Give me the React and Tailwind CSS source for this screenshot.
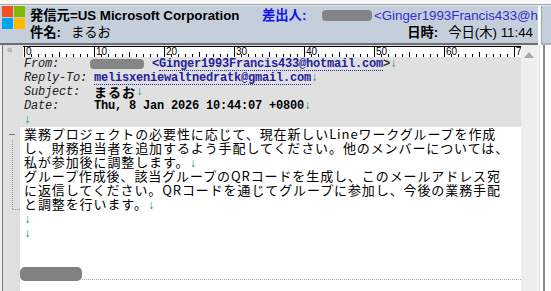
import React from 'react'

const SANS = '"Liberation Sans", "Noto Sans CJK JP", sans-serif'
const MONO = '"Liberation Mono", "Noto Sans CJK JP", monospace'
const JP = '"Noto Sans CJK JP", sans-serif'

function MsLogo() {
  return (
    <div className="grid grid-cols-2 gap-[1px] w-[23px] h-[23px] shrink-0">
      <div className="bg-[#f25022]" />
      <div className="bg-[#7fba00]" />
      <div className="bg-[#00a4ef]" />
      <div className="bg-[#ffb900]" />
    </div>
  )
}

function Ruler() {
  const ticks = []
  for (let i = 0; i <= 71; i++) {
    const x = 1.5 + i * 7
    if (i % 10 === 0) {
      ticks.push(<line key={'l' + i} x1={x} y1="1" x2={x} y2="12" stroke="#000" />)
      ticks.push(
        <text key={'t' + i} x={x + 1.5} y="9" fontSize="10" fontFamily='"Liberation Sans", sans-serif' fill="#000">
          {i}
        </text>
      )
    } else {
      ticks.push(<line key={'l' + i} x1={x} y1={i % 10 === 5 ? 6 : 8} x2={x} y2="11" stroke="#000" />)
    }
  }
  return (
    <svg width="498" height="11" className="block">
      <rect width="498" height="11" fill="#fff" />
      <line x1="0" y1="0.5" x2="498" y2="0.5" stroke="#000" />
      {ticks}
    </svg>
  )
}

function Arrow() {
  return (
    <span className="text-[#008080] text-[12px] tracking-normal" style={{ fontFamily: MONO }}>
      ↓
    </span>
  )
}

const fields = [
  { label: 'From:', from: true },
  { label: 'Reply-To:', link: 'melisxeniewaltnedratk@gmail.com' },
  { label: 'Subject:', subject: 'まるお' },
  { label: 'Date:', text: 'Thu, 8 Jan 2026 10:44:07 +0800' },
]

const body = [
  ['業務プロジェクトの必要性に応じて、現在新しいLineワークグループを作成', false],
  ['し、財務担当者を追加するよう手配してください。他のメンバーについては、', false],
  ['私が参加後に調整します。', true],
  ['グループ作成後、該当グループのQRコードを生成し、このメールアドレス宛', false],
  ['に返信してください。QRコードを通じてグループに参加し、今後の業務手配', false],
  ['と調整を行います。', true],
  ['', true],
  ['', true],
]

export default function App() {
  return (
    <div className="w-[551px] h-[291px] overflow-hidden bg-white flex flex-col" style={{ fontFamily: SANS }}>
      <div className="h-[4px] bg-[#f8f8f8] shrink-0" />
      <div className="h-[1px] bg-[#a8a8a8] shrink-0" />
      <div className="h-[1px] bg-[#dfe5ec] shrink-0" />

      <div className="flex flex-1">
        {/* main column */}
        <div className="w-[538px] flex flex-col">
          {/* header */}
          <div className="h-[37px] bg-[#c4cfdb] flex overflow-hidden">
            <div className="pl-[2px]">
              <MsLogo />
            </div>
            <div className="flex flex-col ml-[5px] flex-1 min-w-0 pt-[1px] text-[13.3px] text-black">
              <div className="h-[17px] leading-[17px] flex items-center whitespace-nowrap">
                <span className="w-[232px] shrink-0 font-bold">発信元=US Microsoft Corporation</span>
                <span className="w-[60px] shrink-0 font-bold text-[#1010f0]">差出人:</span>
                <span className="w-[50px] h-[11px] shrink-0 rounded-[4px] bg-[#848484]" />
                <span className="ml-[2px] text-[#3030cc]">&lt;Ginger1993Francis433@hotmail.com&gt;</span>
              </div>
              <div className="h-[17px] leading-[17px] flex items-center justify-between whitespace-nowrap pr-[5px]">
                <span>
                  <span className="font-bold">件名:</span>
                  <span className="ml-[10px]">まるお</span>
                </span>
                <span>
                  <span className="font-bold">日時:</span>
                  <span className="ml-[10px]">今日(木) 11:44</span>
                </span>
              </div>
            </div>
          </div>
          <div className="h-[2px] bg-[#6e6e6e]" />

          {/* body */}
          <div className="flex flex-1">
            {/* gutter */}
            <div className="w-[20px] flex shrink-0">
              <div className="w-[2px] bg-[#efefef]" />
              <div className="w-[1px] bg-[#7a7a7a]" />
              <div className="flex-1 bg-[#dfdfdf] flex flex-col">
                <div className="h-[12px] pl-[4px] text-[10px] leading-[10px] text-[#8c8c8c]">«</div>
                <div className="h-[76px]" />
                <svg width="17" height="80" className="block">
                  <line x1="6" y1="1.5" x2="12" y2="1.5" stroke="#777" />
                  <line x1="9.5" y1="7" x2="9.5" y2="77" stroke="#999" strokeDasharray="1 1" />
                  <line x1="10" y1="76.5" x2="17" y2="76.5" stroke="#999" strokeDasharray="1 1" />
                </svg>
              </div>
            </div>

            {/* content */}
            <div className="w-[501px] flex flex-col shrink-0">
              <div className="h-[12px] bg-[#e0e0e0] pl-[3px] pt-[1px]">
                <Ruler />
              </div>
              <div className="bg-[#e0e0e0] pl-[4px] text-[12px] tracking-[-0.2px]" style={{ fontFamily: MONO }}>
                {fields.map((f) => (
                  <div key={f.label} className="h-[14px] leading-[14px] flex items-center whitespace-nowrap">
                    <span className="w-[70px] shrink-0 italic text-[#222]">{f.label}</span>
                    {f.from && (
                      <>
                        <span className="w-[54px] h-[10px] -ml-[4px] mr-[8px] rounded-[4px] bg-[#868686]" />
                        <span className="font-bold text-[#23239b]">&lt;</span>
                        <span className="font-bold text-[#23239b] border-b border-dotted border-[#23239b] leading-[12px]">
                          Ginger1993Francis433@hotmail.com
                        </span>
                        <span className="font-bold text-[#333]">&gt;</span>
                        <Arrow />
                      </>
                    )}
                    {f.link && (
                      <>
                        <span className="font-bold text-[#23239b] border-b border-dotted border-[#23239b] leading-[12px]">
                          {f.link}
                        </span>
                        <Arrow />
                      </>
                    )}
                    {f.subject && (
                      <>
                        <span
                          className="font-bold text-[13px] tracking-[1px] leading-[14px] text-black"
                          style={{ fontFamily: JP }}
                        >
                          {f.subject}
                        </span>
                        <Arrow />
                      </>
                    )}
                    {f.text && (
                      <>
                        <span className="font-bold text-black">{f.text}</span>
                        <Arrow />
                      </>
                    )}
                  </div>
                ))}
                <div className="h-[14px] leading-[14px]">
                  <Arrow />
                </div>
              </div>

              <div className="pl-[4px] text-[13px] tracking-[0.9px] text-black" style={{ fontFamily: JP }}>
                {body.map(([t, arrow], i) => (
                  <div key={i} className="h-[14px] leading-[14px] whitespace-nowrap">
                    {t}
                    {arrow && <Arrow />}
                  </div>
                ))}
              </div>
              <div className="h-[28px]" />
              <div className="h-[14px] flex items-end">
                <span className="w-[62px] h-[14px] rounded-[5px] bg-[#818181] shrink-0" />
                <span className="flex-1 border-b border-dotted border-[#a8a8a8] mb-[1px]" />
              </div>
            </div>

            {/* scrollbar */}
            <div className="w-[17px] bg-[#eeeeee] flex flex-col items-center pt-[7px] pr-[1px]">
              <svg width="10" height="6" className="block">
                <polygon points="0,6 5,0 10,6" fill="#a6a6a6" />
              </svg>
            </div>
          </div>
        </div>

        {/* right sliver */}
        <div className="flex-1 flex flex-col bg-white">
          <div className="h-[37px] ml-[3px] bg-[#c4cfdb] border-l border-[#9aa4b0]" />
          <div className="h-[2px] ml-[3px] bg-[#b0b0b0]" />
          <div className="flex-1 flex">
            <div className="w-[1px] ml-[1px] bg-[#d8d8d8]" />
            <div className="w-[2px] ml-[3px] bg-[#86869a]" />
          </div>
        </div>
      </div>
    </div>
  )
}
